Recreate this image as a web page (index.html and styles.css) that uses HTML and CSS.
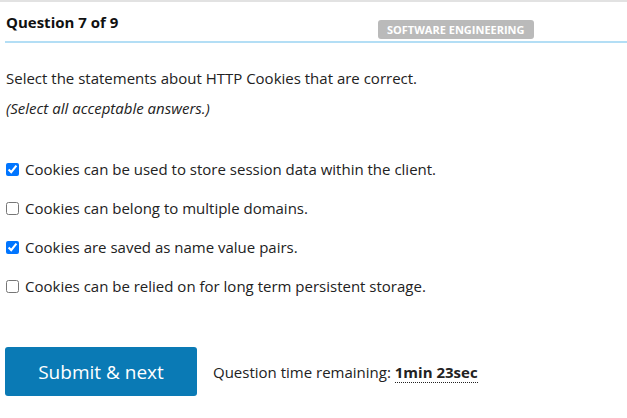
FILE: index.html
```html
<!DOCTYPE html>
<html>
<head>
<meta charset="utf-8">
<link rel="stylesheet" href="styles.css">
</head>
<body>
<div class="page">
  <div class="header">
    <div class="title">Question 7 of 9</div>
    <div class="badge">SOFTWARE ENGINEERING</div>
  </div>
  <div class="content">
    <p class="prompt">Select the statements about HTTP Cookies that are correct.</p>
    <p class="hint">(Select all acceptable answers.)</p>
    <ul class="options">
      <li><label><input type="checkbox" checked> Cookies can be used to store session data within the client.</label></li>
      <li><label><input type="checkbox"> Cookies can belong to multiple domains.</label></li>
      <li><label><input type="checkbox" checked> Cookies are saved as name value pairs.</label></li>
      <li><label><input type="checkbox"> Cookies can be relied on for long term persistent storage.</label></li>
    </ul>
    <div class="footer">
      <button class="submit">Submit &amp; next</button>
      <div class="timer">Question time remaining: <span class="time">1min 23sec</span></div>
    </div>
  </div>
</div>
</body>
</html>
```
FILE: styles.css
```css
html, body {
  margin: 0;
  padding: 0;
  background: #fff;
}
body {
  font-family: "Open Sans", sans-serif;
  color: #222;
  border-top: 2px solid #e2e2e2;
}
.page {
  padding: 0 0 0 5px;
}
.header {
  display: flex;
  align-items: flex-end;
  height: 41px;
  border-bottom: 2px solid #b3def5;
  box-sizing: border-box;
}
.title {
  font-weight: bold;
  font-size: 15px;
  line-height: 20px;
  color: #111;
  width: 372px;
  padding-left: 1px;
  align-self: flex-start;
  margin-top: 10px;
}
.badge {
  background: #bababa;
  color: #fff;
  font-weight: bold;
  font-size: 11px;
  height: 19px;
  line-height: 19px;
  padding: 0 9px;
  border-radius: 3px;
  margin-bottom: 2px;
}
.content {
  padding-left: 1px;
}
.prompt {
  margin: 25px 0 0;
  font-size: 15px;
  line-height: 20px;
}
.hint {
  margin: 10px 0 0;
  font-size: 15px;
  font-style: italic;
  line-height: 20px;
}
.options {
  list-style: none;
  margin: 41px 0 0;
  padding: 0;
  display: flex;
  flex-direction: column;
  gap: 19px;
}
.options li {
  font-size: 15px;
  line-height: 20px;
}
.options label {
  display: flex;
  align-items: center;
  gap: 6px;
}
.options input {
  margin: 0;
  width: 13px;
  height: 13px;
}
.footer {
  margin-top: 51px;
  display: flex;
  align-items: center;
  gap: 16px;
}
.submit {
  margin-left: -1px;
  width: 192px;
  height: 49px;
  background: #0a7ab5;
  color: #fff;
  border: none;
  border-radius: 3px;
  font-family: "Open Sans", sans-serif;
  font-size: 19px;
}
.timer {
  font-size: 15px;
}
.time {
  font-weight: bold;
  border-bottom: 1px dotted #222;
}
```
